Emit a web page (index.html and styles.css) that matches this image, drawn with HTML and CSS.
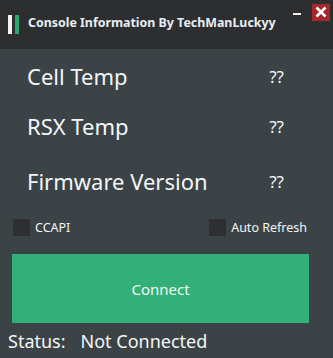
FILE: index.html
```html
<!DOCTYPE html>
<html>
<head>
    <title>Console Information</title>
    <link rel="stylesheet" href="styles.css">
</head>
<body>
    <div class="window">
        <div class="titlebar">
            <span class="bar white"></span>
            <span class="bar green"></span>
            <span class="title">Console Information By TechManLuckyy</span>
            <span class="min"></span>
            <span class="close">
                <svg width="18" height="17" viewBox="0 0 18 17">
                    <path d="M4.5 3.5 L13.5 12.5 M13.5 3.5 L4.5 12.5" stroke="#fff" stroke-width="2.6"/>
                </svg>
            </span>
        </div>

        <div class="content">
            <div class="info-row first">
                <span class="label">Cell Temp</span>
                <span class="value">??</span>
            </div>
            <div class="info-row">
                <span class="label">RSX Temp</span>
                <span class="value">??</span>
            </div>
            <div class="info-row last">
                <span class="label">Firmware Version</span>
                <span class="value">??</span>
            </div>

            <div class="options">
                <label class="check"><span class="box"></span>CCAPI</label>
                <label class="check"><span class="box"></span>Auto Refresh</label>
            </div>

            <div class="connect">Connect</div>

            <div class="status">
                <span>Status:</span>
                <span>Not Connected</span>
            </div>
        </div>
    </div>
</body>
</html>
```

FILE: styles.css
```css
body { margin: 0; background: #3b4347; font-family: "Noto Sans", "Open Sans", sans-serif; color: #f4f6f8; }
.window { width: 333px; height: 358px; overflow: hidden; }

.titlebar { height: 49px; background: #2d2e30; display: flex; align-items: flex-start; }
.bar { width: 4px; height: 19px; margin-top: 15px; }
.bar.white { background: #f2f2f2; margin-left: 8px; }
.bar.green { background: #2ea872; margin-left: 3px; }
.title { margin-left: 9px; margin-top: 14px; font-size: 12.4px; font-weight: bold; color: #e8eef6; }
.min { width: 8px; height: 2px; background: #f0f0f0; margin-top: 13px; margin-left: auto; }
.close { width: 18px; height: 17px; background: #a4282a; margin-top: 4px; margin-left: 11px; margin-right: 3px; display: flex; }

.content { padding: 0 24px 0 8px; }
.info-row { display: flex; justify-content: space-between; align-items: center; height: 50px; padding-left: 19px; padding-right: 25px; }
.info-row.first { margin-top: 2px; }
.info-row.last { margin-top: 5px; }
.label { font-size: 22px; }
.value { font-size: 17px; }

.options { display: flex; justify-content: space-between; margin-top: 13px; padding-left: 5px; padding-right: 2px; font-size: 12.5px; }
.check { display: flex; align-items: center; gap: 5px; }
.box { width: 17px; height: 17px; background: #2d2f32; }

.connect { margin-top: 18px; margin-left: 4px; height: 69px; background: #33b07a; display: flex; align-items: center; justify-content: center; font-size: 15px; color: #eef8f2; }

.status { display: flex; gap: 15px; margin-top: 6px; font-size: 18px; }
```
